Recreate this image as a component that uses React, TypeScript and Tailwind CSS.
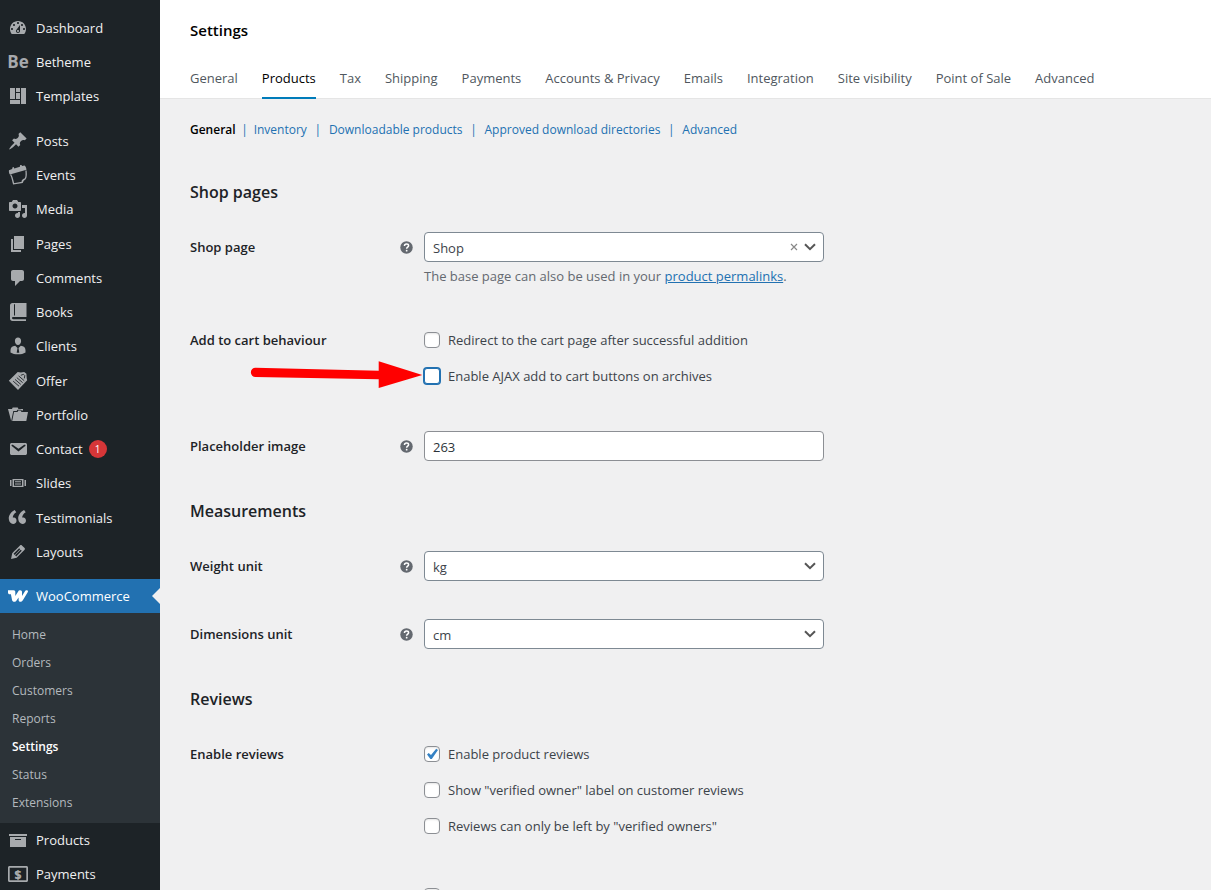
import { useState } from "react";
import type { ReactNode } from "react";

interface MenuItem {
  label: string;
  icon: ReactNode;
  badge?: number;
}

const Glyph = ({ d, children }: { d?: string; children?: ReactNode }) => (
  <svg viewBox="0 0 20 20" className="size-5 fill-current" aria-hidden="true">
    {d && <path fillRule="evenodd" d={d} />}
    {children}
  </svg>
);

const topItems: MenuItem[] = [
  {
    label: "Dashboard",
    icon: (
      <Glyph d="M3.76 16h12.48c1.1-1.37 1.76-3.11 1.76-5 0-4.42-3.58-8-8-8s-8 3.58-8 8c0 1.89.66 3.63 1.76 5zM10 4c.55 0 1 .45 1 1s-.45 1-1 1-1-.45-1-1 .45-1 1-1zM6 6c.55 0 1 .45 1 1s-.45 1-1 1-1-.45-1-1 .45-1 1-1zm8 0c.55 0 1 .45 1 1s-.45 1-1 1-1-.45-1-1 .45-1 1-1zm-5.37 5.55L12 7v6c0 1.1-.9 2-2 2s-2-.9-2-2c0-.57.24-1.08.63-1.45zM4 10c.55 0 1 .45 1 1s-.45 1-1 1-1-.45-1-1 .45-1 1-1zm12 0c.55 0 1 .45 1 1s-.45 1-1 1-1-.45-1-1 .45-1 1-1zm-5 3c0-.55-.45-1-1-1s-1 .45-1 1 .45 1 1 1 1-.45 1-1z" />
    ),
  },
  { label: "Betheme", icon: <span className="text-[17px] leading-5 font-bold">Be</span> },
  {
    label: "Templates",
    icon: <Glyph d="M2 2h5v11H2zM8 2h4v4H8zM13 2h5v16h-5zM8 7h4v6H8zM2 14h10v4H2z" />,
  },
];

const contentItems: MenuItem[] = [
  {
    label: "Posts",
    icon: (
      <Glyph d="M10.44 3.02l1.82-1.82 6.36 6.35-1.83 1.82c-1.05-.68-2.48-.57-3.41.36l-.75.75c-.92.93-1.04 2.35-.35 3.41l-1.83 1.82-2.41-2.41-2.8 2.79c-.42.42-3.38 2.71-3.8 2.29s1.86-3.39 2.28-3.81l2.79-2.79L4.1 9.36l1.83-1.82c1.05.69 2.48.57 3.4-.36l.75-.75c.93-.92 1.05-2.35.36-3.41z" />
    ),
  },
  {
    label: "Events",
    icon: (
      <Glyph d="M1 5.2l3.2-1.1.2-1.6 1.3-.4.6 1.4 5.6-1.8.1-1.5 1.3-.4.8 1.3 2.4-.6c1.2 1 1.8 2.5 2 4.2L1.9 9.6C1 8.4.7 6.8 1 5.2z">
        <path
          d="M2.6 9.5c1.7 2.5 1.9 5.5 3 9.3l8.6-1.3c.4-1.8 1-2.8 2.9-3.6 1.4-1.8 1.2-5.5.9-8.4M14.2 17.5c-.3-1.7.8-3 2.9-3.6"
          className="fill-none stroke-current"
          strokeWidth="1.3"
        />
      </Glyph>
    ),
  },
  {
    label: "Media",
    icon: (
      <Glyph d="M13 11V4c0-.55-.45-1-1-1h-1.67L9 1H5L3.67 3H2c-.55 0-1 .45-1 1v7c0 .55.45 1 1 1h10c.55 0 1-.45 1-1zM7 4.5c1.38 0 2.5 1.12 2.5 2.5S8.38 9.5 7 9.5 4.5 8.38 4.5 7 5.62 4.5 7 4.5zM14 6h5v10.5c0 1.38-1.12 2.5-2.5 2.5S14 17.88 14 16.5s1.12-2.5 2.5-2.5c.17 0 .34.02.5.05V9h-3V6zm-4 8.05V13h2v3.5c0 1.38-1.12 2.5-2.5 2.5S7 17.88 7 16.5 8.12 14 9.5 14c.17 0 .34.02.5.05z" />
    ),
  },
  { label: "Pages", icon: <Glyph d="M6 15V2h10v13H6zm-1 1h8v2H3V5h2v11z" /> },
  {
    label: "Comments",
    icon: (
      <Glyph d="M5 2h9c1.1 0 2 .9 2 2v7c0 1.1-.9 2-2 2h-2l-5 5v-5H5c-1.1 0-2-.9-2-2V4c0-1.1.9-2 2-2z" />
    ),
  },
  {
    label: "Books",
    icon: (
      <Glyph d="M4.5 1H18.5V15H5.2C4.5 15 4 15.5 4 16.1 4 16.7 4.5 17.2 5.2 17.2H18V19H4.5C3 19 2 18 2 16.5V3.5C2 2 3 1 4.5 1zM6 2.2V13.5H7V2.2z" />
    ),
  },
  {
    label: "Clients",
    icon: (
      <Glyph d="M10 1.5c1.9 0 3.1 1.4 3.1 3.4S11.8 9 10 9 6.9 6.9 6.9 4.9 8.1 1.5 10 1.5zM7.2 9.8l2.3 2.2-.8 4.8h2.6L10.5 12l2.3-2.2c3 .3 4.7 1.8 4.7 4.5v2.2c-2 1.3-4.6 1.8-7.5 1.8s-5.5-.5-7.5-1.8v-2.2c0-2.7 1.7-4.2 4.7-4.5z" />
    ),
  },
  {
    label: "Offer",
    icon: (
      <Glyph d="M.8 9.8L9.7 1.1l3.1.5L16.2 1l2.2 1.7.3 4.5.5 2.1L10 19z">
        <path
          d="M5.2 10.2l5.8 5M7 8.4l5.8 5M8.8 6.6l5.8 5M10.6 4.9l5.6 4.8M12.8 4.3l2.7-1 1.3 1.3-.5 2.8"
          className="fill-none stroke-[#1d2327]"
          strokeWidth="0.9"
        />
      </Glyph>
    ),
  },
  {
    label: "Portfolio",
    icon: (
      <Glyph d="M0 4h4l.7-1.5h5L10.5 4H15v1.5h-1.4L12.8 4.8H9.4L8.7 6H5.3L3.2 16zM6 7h3.5l.8-1.4h2.4l.8 1.4H20l-1.7 9H4.2z" />
    ),
  },
  {
    label: "Contact",
    badge: 1,
    icon: (
      <Glyph d="M3.87 4h13.25C18.37 4 19 4.59 19 5.79v8.42c0 1.19-.63 1.79-1.88 1.79H3.87c-1.25 0-1.88-.6-1.88-1.79V5.79c0-1.2.63-1.79 1.88-1.79zm6.62 8.6l6.74-5.53c.24-.2.43-.66.13-1.07-.29-.41-.82-.42-1.17-.17l-5.7 3.86L4.8 5.83c-.35-.25-.88-.24-1.17.17-.3.41-.11.87.13 1.07z" />
    ),
  },
  {
    label: "Slides",
    icon: (
      <Glyph d="M2 7h1.5v6H2zM16.5 7H18v6h-1.5zM4.5 6h11v8h-11zM6 7.3v5.4h8V7.3zM7 8.3h6v1H7zM7 10.6h6v1H7z" />
    ),
  },
  {
    label: "Testimonials",
    icon: (
      <Glyph d="M8.54 12.74c0-.87-.24-1.61-.72-2.22-.73-.92-2.14-1.03-2.96-.85-.34-1.93 1.3-4.39 3.42-5.45L6.65 1.94C3.45 3.46.31 6.96.85 11.37 1.19 14.16 2.8 16 5.08 16c1 0 1.83-.29 2.48-.88.66-.59.98-1.38.98-2.38zm9.43 0c0-.87-.24-1.61-.72-2.22-.73-.92-2.14-1.03-2.96-.85-.34-1.93 1.3-4.39 3.42-5.45l-1.63-2.28c-3.2 1.52-6.34 5.02-5.8 9.43.34 2.79 1.95 4.63 4.23 4.63 1 0 1.83-.29 2.48-.88.66-.59.98-1.38.98-2.38z" />
    ),
  },
  {
    label: "Layouts",
    icon: (
      <Glyph d="M13.89 3.39l2.71 2.72c.46.46.42 1.24.03 1.64l-8.01 8.02-5.56 1.16 1.16-5.58s7.6-7.63 7.99-8.03c.39-.39 1.22-.39 1.68.07zm-2.73 2.79l-5.59 5.61 1.11 1.11 5.54-5.65zm-2.97 8.23l5.58-5.6-1.07-1.08-5.59 5.6z" />
    ),
  },
];

const shopItems: MenuItem[] = [
  { label: "Products", icon: <Glyph d="M19 4v2H1V4h18zM2 7h16v10H2V7zm11 3V9H7v1h6z" /> },
  {
    label: "Payments",
    icon: (
      <Glyph d="M1.5 2h17c.8 0 1.5.7 1.5 1.5v13c0 .8-.7 1.5-1.5 1.5h-17C.7 18 0 17.3 0 16.5v-13C0 2.7.7 2 1.5 2zM1.7 3.7v12.6h16.6V3.7z">
        <text x="10" y="14.5" textAnchor="middle" fontSize="12" fontWeight="800">
          $
        </text>
      </Glyph>
    ),
  },
];

const submenu = ["Home", "Orders", "Customers", "Reports", "Settings", "Status", "Extensions"];

const tabs = [
  "General",
  "Products",
  "Tax",
  "Shipping",
  "Payments",
  "Accounts & Privacy",
  "Emails",
  "Integration",
  "Site visibility",
  "Point of Sale",
  "Advanced",
];

const sections = [
  "General",
  "Inventory",
  "Downloadable products",
  "Approved download directories",
  "Advanced",
];

const MenuLink = ({ item }: { item: MenuItem }) => (
  <a href="#" className="flex min-h-[34px] items-center text-[13px] text-[#f0f0f1]">
    <span className="flex w-9 shrink-0 justify-center text-[#a7aaad]">{item.icon}</span>
    {item.label}
    {item.badge && (
      <span className="ml-1.5 flex size-[18px] items-center justify-center rounded-full bg-[#d63638] text-[10px] text-white">
        {item.badge}
      </span>
    )}
  </a>
);

const Sidebar = () => (
  <nav aria-label="Main menu" className="w-40 shrink-0 bg-[#1d2327] pt-[11px]">
    <ul>
      {topItems.map((item) => (
        <li key={item.label}>
          <MenuLink item={item} />
        </li>
      ))}
    </ul>
    <ul className="mt-[11px] grid min-h-[445px] auto-rows-fr">
      {contentItems.map((item) => (
        <li key={item.label}>
          <MenuLink item={item} />
        </li>
      ))}
    </ul>

    <a
      href="#"
      className="relative mt-2.5 flex h-[34px] items-center bg-[#2271b1] text-[13px] text-white"
    >
      <span className="flex w-9 shrink-0 justify-center">
        <svg viewBox="0 0 20 12" className="h-3 w-5" aria-hidden="true">
          <path
            d="M0 .3H5.6C6.900.3 7.300 1 7.300 2.200V6L10.200 1.400C10.700.6 11.300.3 12.200.3 13.400.3 14 1 14 2.200V6L16.800 1.400C17.400.5 18 .3 18.900.3 20 .3 20.300 1.200 19.700 2.200L15 10C14.300 11.200 13.500 11.800 12.500 11.800 11.300 11.800 10.600 11 10.600 9.700V7.500L8.700 10.300C8 11.300 7.300 11.800 6.300 11.800 5 11.800 4.300 11.200 4 9.800L2.900 4.200H1.800C.6 4.200 0 3.500 0 2.400z"
            className="fill-current"
          />
        </svg>
      </span>
      WooCommerce
      <span className="absolute right-0 border-y-8 border-r-8 border-y-transparent border-r-[#f0f0f1]" />
    </a>
    <ul className="bg-[#2c3338] pt-2 pb-1.5">
      {submenu.map((label) => (
        <li key={label}>
          <a
            href="#"
            className={
              label === "Settings"
                ? "flex h-7 items-center pl-3 text-xs font-semibold text-white"
                : "flex h-7 items-center pl-3 text-xs text-[#b4b9be]"
            }
          >
            {label}
          </a>
        </li>
      ))}
    </ul>
    <ul>
      {shopItems.map((item) => (
        <li key={item.label}>
          <MenuLink item={item} />
        </li>
      ))}
    </ul>
  </nav>
);

const HelpTip = () => (
  <svg viewBox="0 0 20 20" className="size-[15px] text-[#646970]" role="img" aria-label="Help">
    <circle cx="10" cy="10" r="8.3" className="fill-current" />
    <path
      d="M7.3 8c0-1.7 1.2-2.6 2.8-2.6S12.8 6.3 12.8 7.7c0 1.8-2.6 1.9-2.6 4"
      className="fill-none stroke-white"
      strokeWidth="2"
    />
    <circle cx="10.2" cy="14.2" r="1.2" className="fill-white" />
  </svg>
);

// Fila con etiqueta, ayuda y un control de 400px
const FieldRow = ({ id, label, children }: { id: string; label: string; children: ReactNode }) => (
  <div className="grid grid-cols-[234px_1fr] py-[19px]">
    <div className="flex h-[30px] items-center justify-between pr-2.5">
      <label htmlFor={id} className="font-semibold text-[#1d2327]">
        {label}
      </label>
      <HelpTip />
    </div>
    <div>{children}</div>
  </div>
);

interface SelectProps {
  id: string;
  value: string;
  options: string[];
  onChange: (value: string) => void;
  onClear?: () => void;
}

const Select = ({ id, value, options, onChange, onClear }: SelectProps) => (
  <div className="relative flex max-w-[400px] items-center">
    <select
      id={id}
      value={value}
      onChange={(e) => onChange(e.target.value)}
      className="h-[30px] w-full appearance-none rounded-sm border border-[#7e8993] bg-white px-2 pt-0.5 text-[13px] text-[#3c434a]"
    >
      {options.map((option) => (
        <option key={option}>{option}</option>
      ))}
    </select>
    {onClear && (
      <button
        type="button"
        aria-label="Clear"
        onClick={onClear}
        className="absolute right-[25px] flex size-2.5 items-center justify-center text-[#888]"
      >
        <svg viewBox="0 0 8 8" className="size-2 fill-none stroke-current" aria-hidden="true">
          <path d="M1 1l6 6M7 1l-6 6" strokeWidth="1.2" />
        </svg>
      </button>
    )}
    <svg
      viewBox="0 0 12 8"
      className="pointer-events-none absolute right-2 h-2 w-3 fill-none stroke-[#555]"
      aria-hidden="true"
    >
      <path d="M1 1.2L6 6.2L11 1.2" strokeWidth="2" />
    </svg>
  </div>
);

interface CheckProps {
  label?: string;
  checked?: boolean;
  highlighted?: boolean;
}

const Check = ({ label, checked, highlighted }: CheckProps) => (
  <label className="relative flex h-5 items-center gap-2">
    {highlighted && (
      <svg
        viewBox="0 0 173 29"
        className="absolute -top-1.5 right-full mr-px h-[29px] w-[173px] fill-[#ff0000]"
        aria-hidden="true"
      >
        <path d="M5.5 7.7L128.7 10.7V1.3L172.3 15L128.7 28V19.3L5.5 17a4.6 4.6 0 0 1 0-9.3z" />
      </svg>
    )}
    <span className="relative flex size-4">
      <input
        type="checkbox"
        defaultChecked={checked}
        aria-label={label ? undefined : "Product ratings"}
        className={
          highlighted
            ? "peer size-4 appearance-none rounded-[3px] border border-[#2271b1] bg-white shadow-[0_0_0_1px_#2271b1]"
            : "peer size-4 appearance-none rounded-[4px] border border-[#8c8f94] bg-white shadow-[inset_0_1px_2px_rgba(0,0,0,0.1)]"
        }
      />
      <svg
        viewBox="0 0 16 16"
        className="pointer-events-none absolute inset-0 hidden size-4 fill-[#3582c4] peer-checked:block"
        aria-hidden="true"
      >
        <path d="M12.2 2.8L14 4L7.8 13H6.4L3 8.6L4.7 6.9L7 8.9z" />
      </svg>
    </span>
    {label}
  </label>
);

const CheckRow = ({ legend, children }: { legend?: string; children: ReactNode }) => (
  <div role="group" aria-label={legend} className="grid grid-cols-[234px_1fr] pt-6 pb-[26px]">
    <span className="font-semibold text-[#1d2327]">{legend}</span>
    <div className="flex flex-col items-start gap-4">{children}</div>
  </div>
);

const Heading = ({ children }: { children: ReactNode }) => (
  <h2 className="mt-[19px] mb-[9px] text-base leading-6 font-semibold text-[#1d2327]">
    {children}
  </h2>
);

const App = () => {
  const [shopPage, setShopPage] = useState("Shop");
  const [placeholder, setPlaceholder] = useState("263");
  const [weight, setWeight] = useState("kg");
  const [dimensions, setDimensions] = useState("cm");

  return (
    <div className="flex h-screen overflow-hidden bg-[#f0f0f1] font-['Open_Sans','Noto_Sans',sans-serif] text-[13px] leading-5 text-[#3c434a]">
      <Sidebar />

      <div className="min-w-0 flex-1">
        <header className="border-b border-[#e5e5e5] bg-white px-[30px] pt-5">
          <h1 className="text-[15px] leading-5 font-semibold text-black">Settings</h1>
          <nav aria-label="Settings tabs" className="mt-7 -mb-px flex gap-6 whitespace-nowrap">
            {tabs.map((tab) => (
              <a
                key={tab}
                href="#"
                className={
                  tab === "Products"
                    ? "border-b-2 border-[#007cba] pb-[9px] text-black"
                    : "border-b-2 border-transparent pb-[9px] text-[#50575e]"
                }
              >
                {tab}
              </a>
            ))}
          </nav>
        </header>

        <main className="px-[30px] pt-[21px]">
          <ul className="mb-10 flex text-xs leading-5 whitespace-nowrap text-[#2271b1]">
            {sections.map((section, index) => (
              <li key={section} className="flex">
                {index > 0 && (
                  <span className={index === 1 ? "w-[18px] text-center" : "w-[22px] text-center"}>
                    |
                  </span>
                )}
                <a href="#" className={index === 0 ? "font-semibold text-black" : ""}>
                  {section}
                </a>
              </li>
            ))}
          </ul>

          <form>
            <Heading>Shop pages</Heading>
            <FieldRow id="shop-page" label="Shop page">
              <Select
                id="shop-page"
                value={shopPage}
                options={["", "Shop"]}
                onChange={setShopPage}
                onClear={() => setShopPage("")}
              />
              <p className="mt-1 pb-px text-[#646970]">
                The base page can also be used in your{" "}
                <a href="#" className="text-[#2271b1] underline">
                  product permalinks
                </a>
                .
              </p>
            </FieldRow>
            <CheckRow legend="Add to cart behaviour">
              <Check label="Redirect to the cart page after successful addition" />
              <Check label="Enable AJAX add to cart buttons on archives" highlighted />
            </CheckRow>
            <FieldRow id="placeholder-image" label="Placeholder image">
              <input
                id="placeholder-image"
                type="text"
                value={placeholder}
                onChange={(e) => setPlaceholder(e.target.value)}
                className="block h-[30px] w-full max-w-[400px] rounded-sm border border-[#8c8f94] bg-white px-2 pt-0.5 text-[13px] text-[#2c3338]"
              />
            </FieldRow>

            <Heading>Measurements</Heading>
            <FieldRow id="weight-unit" label="Weight unit">
              <Select
                id="weight-unit"
                value={weight}
                options={["kg", "g", "lbs", "oz"]}
                onChange={setWeight}
              />
            </FieldRow>
            <FieldRow id="dimensions-unit" label="Dimensions unit">
              <Select
                id="dimensions-unit"
                value={dimensions}
                options={["m", "cm", "mm", "in", "yd"]}
                onChange={setDimensions}
              />
            </FieldRow>

            <Heading>Reviews</Heading>
            <CheckRow legend="Enable reviews">
              <Check label="Enable product reviews" checked />
              <Check label={'Show "verified owner" label on customer reviews'} />
              <Check label={'Reviews can only be left by "verified owners"'} />
            </CheckRow>
            <CheckRow>
              <Check checked />
            </CheckRow>
          </form>
        </main>
      </div>
    </div>
  );
};

export default App;
